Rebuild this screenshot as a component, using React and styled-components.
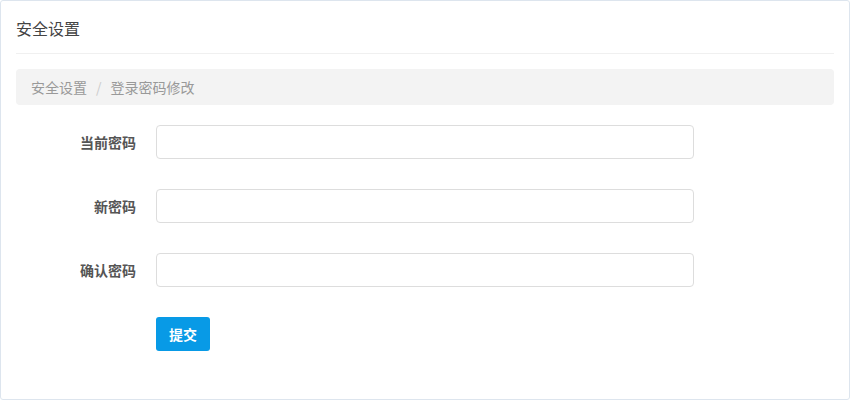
import React from "react";
import styled, { createGlobalStyle } from "styled-components";

const Global = createGlobalStyle`
  html, body { margin: 0; padding: 0; background: #fff; }
  body { font-family: "Noto Sans CJK SC", "Noto Sans", sans-serif; }
  * { box-sizing: border-box; }
`;

const Card = styled.div`
  width: 850px;
  height: 400px;
  border: 1px solid #dde5ee;
  border-radius: 3px;
  background: #fff;
  padding: 0 15px;
  display: flex;
  flex-direction: column;
`;

const Header = styled.div`
  height: 53px;
  display: flex;
  align-items: center;
  border-bottom: 1px solid #f0f0f0;
  font-size: 16px;
  color: #444;
  padding-top: 2px;
`;

const Breadcrumb = styled.div`
  margin-top: 15px;
  height: 36px;
  background: #f3f3f3;
  border-radius: 4px;
  display: flex;
  align-items: center;
  padding: 0 15px;
  font-size: 14px;
  color: #999;
`;

const Sep = styled.span`
  color: #ccc;
  margin: 0 9px;
`;

const Form = styled.form`
  margin-top: 20px;
  display: flex;
  flex-direction: column;
  gap: 30px;
`;

const Row = styled.div`
  display: flex;
  align-items: center;
  gap: 20px;
`;

const Label = styled.label`
  width: 120px;
  text-align: right;
  font-size: 14px;
  font-weight: bold;
  color: #555;
`;

const Input = styled.input`
  width: 538px;
  height: 34px;
  border: 1px solid #ddd;
  border-radius: 4px;
  outline: none;
  padding: 0 10px;
  font-size: 14px;
`;

const Spacer = styled.div`
  width: 120px;
`;

const Button = styled.button`
  width: 54px;
  height: 34px;
  border: none;
  border-radius: 3px;
  background: #089ae6;
  color: #fff;
  font-size: 14px;
  font-weight: bold;
  font-family: inherit;
  padding: 0;
`;

const fields = ["当前密码", "新密码", "确认密码"];

export default function App() {
  return (
    <>
      <Global />
      <Card>
        <Header>安全设置</Header>
        <Breadcrumb>
          安全设置<Sep>/</Sep>登录密码修改
        </Breadcrumb>
        <Form onSubmit={(e) => e.preventDefault()}>
          {fields.map((f) => (
            <Row key={f}>
              <Label>{f}</Label>
              <Input type="password" />
            </Row>
          ))}
          <Row>
            <Spacer />
            <Button type="submit">提交</Button>
          </Row>
        </Form>
      </Card>
    </>
  );
}
